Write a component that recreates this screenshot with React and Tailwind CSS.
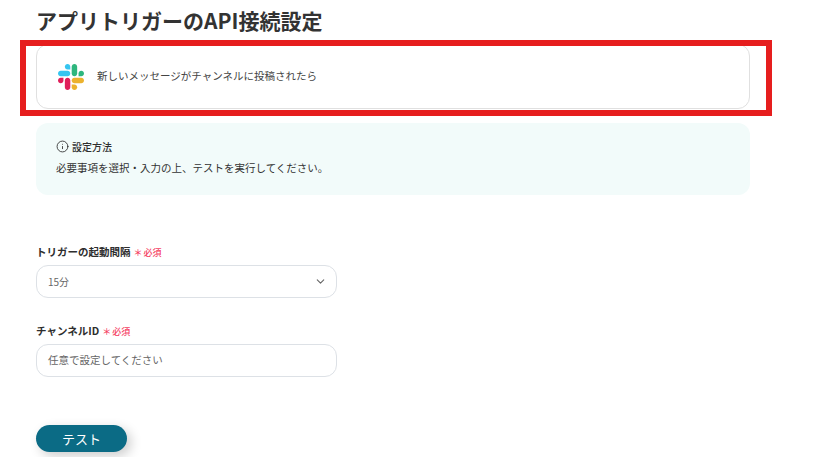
import { ChevronDown, Info } from "lucide-react";

function SlackLogo() {
  return (
    <svg width="26" height="26" viewBox="0 0 122.8 122.8">
      <path d="M25.8 77.6c0 7.1-5.8 12.9-12.9 12.9S0 84.7 0 77.6s5.8-12.9 12.9-12.9h12.9v12.9z" fill="#e01e5a" />
      <path d="M32.3 77.6c0-7.1 5.8-12.9 12.9-12.9s12.9 5.8 12.9 12.9v32.3c0 7.1-5.8 12.9-12.9 12.9s-12.9-5.8-12.9-12.9V77.6z" fill="#e01e5a" />
      <path d="M45.2 25.8c-7.1 0-12.9-5.8-12.9-12.9S38.1 0 45.2 0s12.9 5.8 12.9 12.9v12.9H45.2z" fill="#36c5f0" />
      <path d="M45.2 32.3c7.1 0 12.9 5.8 12.9 12.9s-5.8 12.9-12.9 12.9H12.9C5.8 58.1 0 52.3 0 45.2s5.8-12.9 12.9-12.9h32.3z" fill="#36c5f0" />
      <path d="M97 45.2c0-7.1 5.8-12.9 12.9-12.9s12.9 5.8 12.9 12.9-5.8 12.9-12.9 12.9H97V45.2z" fill="#2eb67d" />
      <path d="M90.5 45.2c0 7.1-5.8 12.9-12.9 12.9s-12.9-5.8-12.9-12.9V12.9C64.7 5.8 70.5 0 77.6 0s12.9 5.8 12.9 12.9v32.3z" fill="#2eb67d" />
      <path d="M77.6 97c7.1 0 12.9 5.8 12.9 12.9s-5.8 12.9-12.9 12.9-12.9-5.8-12.9-12.9V97h12.9z" fill="#ecb22e" />
      <path d="M77.6 90.5c-7.1 0-12.9-5.8-12.9-12.9s5.8-12.9 12.9-12.9h32.3c7.1 0 12.9 5.8 12.9 12.9s-5.8 12.9-12.9 12.9H77.6z" fill="#ecb22e" />
    </svg>
  );
}

function FieldLabel({ children }) {
  return (
    <div className="flex items-center h-[14px] text-[10.5px] font-bold text-[#2e2e2e] leading-none">
      <span>{children}</span>
      <span className="ml-[3px] text-[9px] font-medium text-[#f5405f]">＊</span>
      <span className="ml-px text-[9px] font-medium text-[#f5405f]">必須</span>
    </div>
  );
}

export default function App() {
  return (
    <div className="relative w-[835px] h-[457px] overflow-hidden bg-white pl-9 font-['Noto_Sans_CJK_JP','Noto_Sans',sans-serif]">
      <h1 className="h-11 pt-[5px] text-[21px] leading-[30px] font-bold text-[#333]">
        アプリトリガーのAPI接続設定
      </h1>

      {/* trigger card */}
      <div className="flex items-center w-[714px] h-[65px] pl-[21px] rounded-xl border border-[#e0e0e0] bg-white">
        <SlackLogo />
        <span className="ml-[13px] mb-px text-[10.5px] text-[#444]">新しいメッセージがチャンネルに投稿されたら</span>
      </div>

      {/* how to */}
      <div className="mt-[14px] w-[714px] h-[72px] pl-[20px] pt-[15px] rounded-xl bg-[#f2fbfa]">
        <div className="flex items-center h-4 text-[10px] font-medium text-[#2e2e2e]">
          <Info size={13} strokeWidth={1.6} className="mr-[3px]" />
          設定方法
        </div>
        <p className="mt-[6px] text-[10.5px] leading-4 text-[#333]">
          必要事項を選択・入力の上、テストを実行してください。
        </p>
      </div>

      <div className="mt-[50px]">
        <FieldLabel>トリガーの起動間隔</FieldLabel>
        <div className="mt-[6px] flex items-center justify-between w-[301px] h-[33px] pl-[11px] pr-[9px] rounded-xl border border-[#dde1e6] text-[10px] text-[#666]">
          15分
          <ChevronDown size={13} className="text-[#666]" />
        </div>
      </div>

      <div className="mt-[26px]">
        <FieldLabel>チャンネルID</FieldLabel>
        <div className="mt-[6px] flex items-center w-[301px] h-[33px] pl-[11px] pb-px rounded-xl border border-[#dde1e6] text-[10.5px] text-[#666]">
          任意で設定してください
        </div>
      </div>

      <button className="mt-[48px] block w-[91px] h-[27px] rounded-full bg-[#0b6b85] text-[13px] text-white shadow-[4px_4px_12px_rgba(0,0,0,0.2)]">
        テスト
      </button>

      {/* red highlight over the card */}
      <div className="absolute left-5 top-10 w-[752px] h-[76px] border-[6px] border-[#e61e1e] pointer-events-none" />
    </div>
  );
}
